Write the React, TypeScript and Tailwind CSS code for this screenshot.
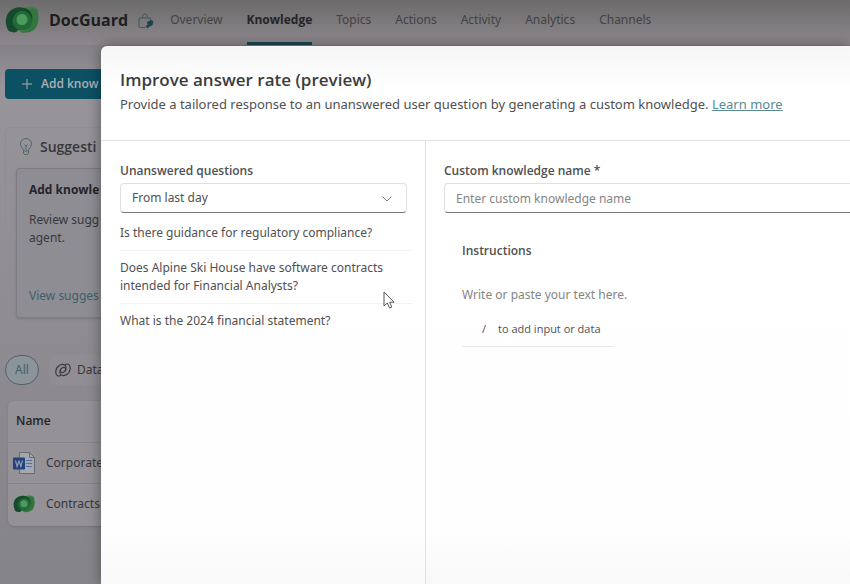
import React from "react";
import { ChevronDown, Plus } from "lucide-react";

const tabs: string[] = [
  "Overview",
  "Knowledge",
  "Topics",
  "Actions",
  "Activity",
  "Analytics",
  "Channels",
];

const questions: string[] = [
  "Is there guidance for regulatory compliance?",
  "Does Alpine Ski House have software contracts intended for Financial Analysts?",
  "What is the 2024 financial statement?",
];

const DataverseLogo: React.FC<{ className?: string }> = ({ className }) => (
  <svg viewBox="0 0 34 28" className={className} aria-hidden="true">
    <path
      d="M17 4C20 0 28 0 32 3c2 5 2 13-2 18-4 5-10 6-15 4z"
      fill="#3b8247"
    />
    <path
      d="M24 4c4 6 4 14-2 19-3 3-7 3-9 2 5 3 13 2 17-2 4-5 4-13 2-19-2-2-5-2-8 0z"
      fill="#34753f"
    />
    <path
      d="M3 24C0 18 0 11 4 6 9 0 18 0 24 4c3 3 4 7 3 11-2 7-8 10-14 9-1 2-3 3-6 2-2 0-3-1-4-2z"
      fill="#164a2c"
    />
    <path
      d="M9 10c3-5 9-7 14-3 5 4 5 11 1 15-5 3-11 3-14-1-3-3-3-8-1-11z"
      fill="#226b38"
    />
    <circle cx="17" cy="13.500" r="5.500" fill="#4c9a5c" />
  </svg>
);

const WordIcon: React.FC = () => (
  <svg viewBox="0 0 24 24" className="h-6 w-6 shrink-0" aria-hidden="true">
    <path
      d="M7.500 1.500h10l5 5v16h-15z"
      fill="#a4a6b0"
      stroke="#666a77"
      strokeWidth="1"
      strokeLinejoin="round"
    />
    <path d="M17.500 1.500v5h5" fill="none" stroke="#666a77" />
    <path d="M14 9.500h6M14 12.500h6M14 15.500h6" stroke="#5471a2" />
    <rect x="1" y="6.500" width="12" height="12" rx="1" fill="#23427a" />
    <path
      d="M3.500 9.500l1.600 6 1.900-5.500 1.900 5.500 1.600-6"
      fill="none"
      stroke="#8f9cb8"
      strokeWidth="1.200"
    />
  </svg>
);

const App: React.FC = () => {
  return (
    <div className="relative min-h-screen overflow-hidden bg-linear-to-b from-[#706f71] via-[#97949a] via-15% to-[#858489] font-['Noto_Sans','Open_Sans',sans-serif] text-[#38373b]">
      {/* Agent header */}
      <header className="flex h-[46px] items-stretch border-b border-[#858287] bg-linear-to-b from-[#6c6b6b] to-[#8d888d] pl-[5px]">
        <div className="flex items-center pb-1.5">
          <DataverseLogo className="h-7 w-[34px]" />
          <h1 className="ml-2.5 font-['Open_Sans',sans-serif] text-base font-bold text-[#1e1d20]">
            DocGuard
          </h1>
          <svg
            viewBox="0 0 16 16"
            className="mt-0.5 ml-2.5 h-4 w-4"
            fill="none"
            stroke="#3a5660"
            aria-hidden="true"
          >
            <path d="M7 14.500H2.500A1.500 1.500 0 0 1 1 13V5h11.500v2.500" />
            <path d="M4.500 5V3.500C4.500 2 5.500 1 6.800 1S9 2 9 3.500V5" />
            <path
              d="M9.500 9l4-1.500 1.500 1-1 3.500-2.500 1-2 2-1.500-1.500 2-2z"
              fill="#1f424e"
              stroke="#1f424e"
            />
          </svg>
        </div>
        <nav className="ml-4 flex gap-6 text-xs">
          {tabs.map((tab) => (
            <a
              key={tab}
              href="#"
              className={
                tab === "Knowledge"
                  ? "flex items-center border-b-3 border-[#1d4653] pb-0.5 font-['Open_Sans',sans-serif] font-bold text-[#252428]"
                  : "flex items-center pb-[5px] text-[#434145]"
              }
            >
              {tab}
            </a>
          ))}
        </nav>
      </header>

      {/* Knowledge page */}
      <main className="px-[5px] pt-[23px]">
        <button className="flex h-[30px] w-44 items-center gap-1.5 rounded-sm bg-[#0b5163] pl-3.5 font-['Open_Sans',sans-serif] text-xs font-semibold text-[#aaafb4]">
          <Plus className="h-4 w-4" strokeWidth={1.5} />
          Add know
        </button>

        <section className="mt-7 rounded-md border border-[#918e93] px-2.5 pt-1.5 pb-3">
          <h2 className="flex h-[26px] items-center gap-1.5 font-['Open_Sans',sans-serif] text-sm font-semibold">
            <svg
              viewBox="0 0 16 18"
              className="ml-0.5 h-[18px] w-4"
              fill="none"
              stroke="#4f666e"
              aria-hidden="true"
            >
              <path d="M5.500 12.500C5.500 10.500 2.500 9.500 2.500 6a5.500 5.500 0 0 1 11 0c0 3.500-3 4.500-3 6.500v2.500l-1 1.500h-3l-1-1.500zM5.500 13h5" />
              <path d="M8 12V8M6.500 6.500L8 8l1.500-1.500" />
            </svg>
            Suggesti
          </h2>
          <div className="mt-2 h-[150px] rounded-sm border border-[#7e7c82] bg-[#8e8d94] px-3 pt-3 text-xs shadow-sm">
            <h3 className="font-['Open_Sans',sans-serif] leading-[18px] font-bold text-[#252428]">
              Add knowle
            </h3>
            <p className="mt-3 leading-[18px]">
              Review sugg
              <br />
              agent.
            </p>
            <a href="#" className="mt-10 block leading-[18px] text-[#3b606a]">
              View sugges
            </a>
          </div>
        </section>

        <div className="mt-6 flex items-center gap-2.5 text-xs">
          <button className="h-[30px] w-[34px] rounded-full border border-[#535f66] bg-[#8b949a] text-[#44616a]">
            All
          </button>
          <button className="flex h-[30px] w-28 items-center gap-1.5 rounded-md bg-[#918e93] pl-1.5">
            <svg
              viewBox="0 0 16 14"
              className="h-3.5 w-4"
              fill="none"
              stroke="#3d3b3f"
              strokeWidth="1.200"
              aria-hidden="true"
            >
              <path d="M2 12.500C0 10 .5 5.500 3.500 3 6.500.5 10.500 1 11 4c.5 3-2 6-4.500 5.500C5 9 5 7 6 6" />
              <path d="M14 1.500c2 2.500 1.500 7-1.500 9.500-3 2.500-7 2-7.500-1-.5-3 2-6 4.500-5.500C11 5 11 7 10 8" />
              <path d="M2 12.500c1.500.8 3 .5 4-.2M14 1.500c-1.500-.8-3-.5-4 .2" />
            </svg>
            Data
          </button>
        </div>

        <div className="mt-4 ml-[3px] rounded-md bg-[#949197] pb-0.5 shadow-sm">
          <table className="w-full border-collapse text-left text-xs">
            <thead>
              <tr className="h-[41px]">
                <th className="pl-2 font-['Open_Sans',sans-serif] font-semibold text-[#252428]">
                  Name
                </th>
              </tr>
            </thead>
            <tbody>
              <tr className="h-[41px] border-t border-[#878489]">
                <td className="pl-1">
                  <div className="flex items-center gap-2.5">
                    <WordIcon />
                    Corporate
                  </div>
                </td>
              </tr>
              <tr className="h-[41px] border-t border-[#878489]">
                <td className="pl-1">
                  <div className="flex items-center gap-2.5">
                    <DataverseLogo className="h-[18px] w-6" />
                    Contracts
                  </div>
                </td>
              </tr>
            </tbody>
          </table>
        </div>
      </main>

      {/* Dialog over the page */}
      <div className="absolute inset-0 flex pt-[46px] pl-[101px]">
        <div
          role="dialog"
          aria-labelledby="dialog-title"
          className="flex flex-1 flex-col rounded-tl-md bg-[linear-gradient(to_bottom,#f6f6f6,#ffffff_8%,#fefefe_90%,#f8f8f8)] text-[#505052] shadow-[0_0_14px_rgba(0,0,0,0.4)]"
        >
          <header className="h-[95px] border-b border-[#e2e2e2] px-[19px] pt-[22px]">
            <h2
              id="dialog-title"
              className="font-['Open_Sans',sans-serif] text-[17px] leading-6 font-semibold text-[#3c3c3e]"
            >
              Improve answer rate (preview)
            </h2>
            <p className="text-[13px] leading-6">
              Provide a tailored response to an unanswered user question by
              generating a custom knowledge.{" "}
              <a href="#" className="text-[#5b8a91] underline">
                Learn more
              </a>
            </p>
          </header>

          <div className="flex flex-1 text-xs">
            <section className="w-[325px] shrink-0 border-r border-[#e2e2e2] pt-5 pr-3 pl-[19px]">
              <label
                htmlFor="period"
                className="block font-['Open_Sans',sans-serif] leading-5 font-semibold"
              >
                Unanswered questions
              </label>
              <div className="relative mt-0.5 mr-1.5">
                <select
                  id="period"
                  className="h-[30px] w-full appearance-none rounded-sm border border-[#e0e0e0] border-b-[#777777] bg-white px-[11px]"
                >
                  <option>From last day</option>
                </select>
                <ChevronDown
                  className="pointer-events-none absolute top-2 right-3 h-4 w-4 text-[#777777]"
                  strokeWidth={1.5}
                />
              </div>
              <ul className="mt-[3px]">
                {questions.map((question) => (
                  <li
                    key={question}
                    className="border-b border-[#f2f2f2] py-2 leading-[18px] last:border-0"
                  >
                    {question}
                  </li>
                ))}
              </ul>
            </section>

            <section className="min-w-0 flex-1 pt-5 pl-[18px]">
              <label
                htmlFor="knowledge-name"
                className="block font-['Open_Sans',sans-serif] leading-5 font-semibold"
              >
                Custom knowledge name *
              </label>
              <input
                id="knowledge-name"
                type="text"
                placeholder="Enter custom knowledge name"
                className="mt-0.5 h-[30px] w-full rounded-l-sm border border-r-0 border-[#e0e0e0] border-b-[#777777] bg-white px-[11px] placeholder:text-[#858585]"
              />
              <div className="pt-7 pl-[18px]">
                <label
                  htmlFor="instructions"
                  className="block font-['Open_Sans',sans-serif] leading-5 font-semibold"
                >
                  Instructions
                </label>
                <textarea
                  id="instructions"
                  rows={1}
                  placeholder="Write or paste your text here."
                  className="mt-6 block w-full resize-none leading-5 placeholder:text-[#858585]"
                />
                <div className="mt-3.5 flex h-7 w-[152px] items-start gap-3 border-b border-[#e9e9e9] pl-5 font-['Open_Sans',sans-serif] text-[11px] leading-5 whitespace-nowrap">
                  <kbd className="font-['Open_Sans',sans-serif]">/</kbd>
                  to add input or data
                </div>
              </div>
            </section>
          </div>
        </div>
      </div>

      {/* Mouse pointer */}
      <svg
        viewBox="0 0 12 18"
        className="pointer-events-none absolute top-[291px] left-[383px] h-[18px] w-3"
        aria-hidden="true"
      >
        <path
          d="M1 1v14l3.300-3 2.200 5 2.300-1-2.200-4.800H11z"
          fill="#ffffff"
          stroke="#555555"
          strokeLinejoin="round"
        />
      </svg>
    </div>
  );
};

export default App;
